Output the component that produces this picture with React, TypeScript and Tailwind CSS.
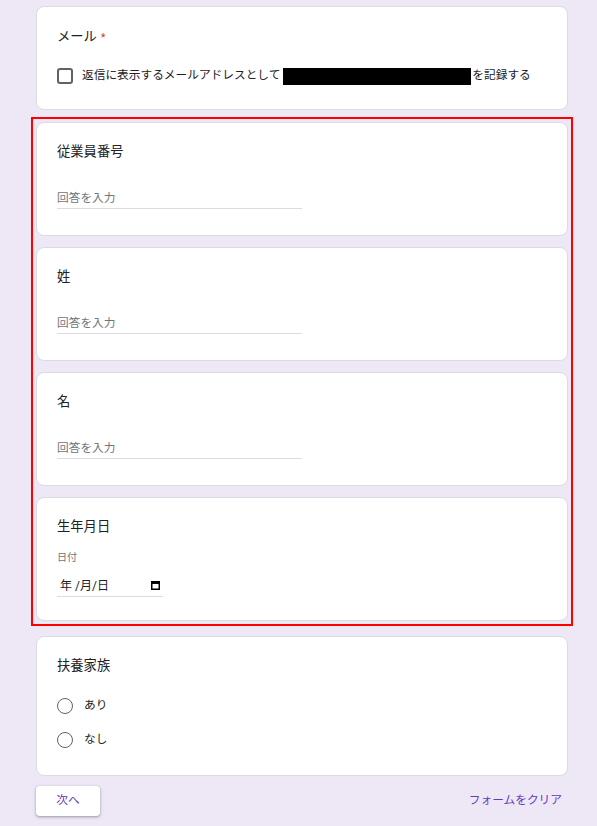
import { ReactNode } from 'react';

const FONT = 'font-["Roboto","Noto_Sans_CJK_JP",sans-serif]';

function Card({ className, children }: { className?: string; children: ReactNode }) {
  return (
    <div className={`rounded-[8px] border border-[#dadce0] bg-white px-[20px] ${className ?? ''}`}>
      {children}
    </div>
  );
}

function TextQuestion({ title }: { title: string }) {
  return (
    <Card className="h-[114px] pt-[19px]">
      <p className="h-[20px] text-[13.3px] leading-[20px] text-[#202124]">{title}</p>
      <div className="mt-[27px] flex h-[20px] w-[245px] items-center border-b border-[#dadce0] text-[11.7px] text-[#70757a]">
        回答を入力
      </div>
    </Card>
  );
}

function Radio({ label }: { label: string }) {
  return (
    <label className="flex h-[18px] items-center gap-[11px] text-[11.7px] text-[#202124]">
      <span className="h-[16px] w-[16px] rounded-full border-[1.5px] border-[#5f6368]" />
      <span>{label}</span>
    </label>
  );
}

export default function App() {
  return (
    <div className={`min-h-screen bg-[#ede7f6] pt-[6px] pb-[10px] ${FONT}`}>
      <div className="ml-[36px] flex w-[532px] flex-col">
        {/* メール */}
        <Card className="h-[104px] pt-[20px]">
          <p className="flex h-[20px] items-center text-[13.3px] text-[#202124]">
            メール<span className="ml-[4px] text-[10px] text-[#d93025]">*</span>
          </p>
          <div className="mt-[20px] flex h-[18px] items-center text-[11.7px] text-[#202124]">
            <span className="mr-[9px] h-[16px] w-[16px] shrink-0 rounded-[3px] border-2 border-[#5f6368]" />
            <span>返信に表示するメールアドレスとして</span>
            <span className="ml-[3px] h-[17px] w-[188px] bg-black" />
            <span className="ml-[1px]">を記録する</span>
          </div>
        </Card>

        {/* highlighted block */}
        <div className="-mx-[5px] mt-[7px] flex flex-col gap-[11px] border-2 border-[#ff0000] px-[3px] py-[3px]">
          <TextQuestion title="従業員番号" />
          <TextQuestion title="姓" />
          <TextQuestion title="名" />
          <Card className="h-[124px] pt-[19px]">
            <p className="h-[20px] text-[13.3px] leading-[20px] text-[#202124]">生年月日</p>
            <p className="mt-[15px] h-[12px] text-[10px] leading-[12px] text-[#70757a]">日付</p>
            <div className="mt-[12px] flex h-[21px] w-[106px] items-center justify-between border-b border-[#dadce0] pl-[3px] pr-[3px] text-[12px] text-[#202124]">
              <span>年 /月/日</span>
              <svg width="9" height="9" viewBox="0 0 9 9" className="mb-[1px]">
                <rect x="0.75" y="0.75" width="7.5" height="7.5" fill="none" stroke="#000" strokeWidth="1.5" />
                <rect x="0.75" y="0.75" width="7.5" height="2.2" fill="#000" />
              </svg>
            </div>
          </Card>
        </div>

        {/* 扶養家族 */}
        <Card className="mt-[10px] h-[140px] pt-[19px]">
          <p className="h-[20px] text-[13.3px] leading-[20px] text-[#202124]">扶養家族</p>
          <div className="mt-[21px] flex flex-col gap-[16px]">
            <Radio label="あり" />
            <Radio label="なし" />
          </div>
        </Card>

        <div className="mt-[10px] flex items-center justify-between">
          <button className="h-[30px] w-[64px] rounded-[4px] bg-white text-[11.7px] text-[#673ab7] shadow-[0_1px_2px_rgba(60,64,67,0.3),0_1px_3px_1px_rgba(60,64,67,0.15)]">
            次へ
          </button>
          <button className="mr-[6px] text-[11.7px] text-[#673ab7]">フォームをクリア</button>
        </div>
      </div>
    </div>
  );
}
